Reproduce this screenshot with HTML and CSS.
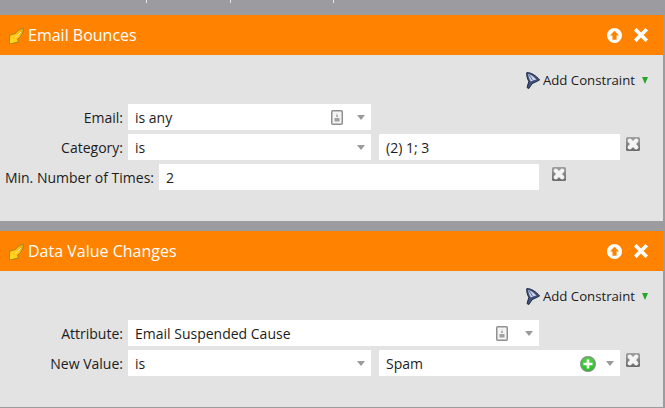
FILE: index.html
```html
<!DOCTYPE html>
<html lang="en">
  <head>
    <meta charset="UTF-8" />
    <title>Smart list filters</title>
    <link rel="stylesheet" href="styles.css">
  </head>
  <body>
    <svg class="sprites" width="0" height="0" aria-hidden="true">
      <defs>
        <linearGradient id="bolt-fill" x1="1" y1="0" x2="0" y2="1">
          <stop offset="0" stop-color="#e0a820" />
          <stop offset=".55" stop-color="#ffc814" />
          <stop offset="1" stop-color="#ffe02a" />
        </linearGradient>
        <linearGradient id="del-fill" x1="0" y1="0" x2="0" y2="1">
          <stop offset="0" stop-color="#a0a0a0" />
          <stop offset="1" stop-color="#6c6c6c" />
        </linearGradient>
        <linearGradient id="plus-fill" x1="0" y1="0" x2="0" y2="1">
          <stop offset="0" stop-color="#58d04c" />
          <stop offset="1" stop-color="#22c022" />
        </linearGradient>
        <symbol id="bolt" viewBox="0 0 15 16">
          <path d="M15 0 C11 1 8 2.5 6.5 5.5 L.8 7 L.3 16 L9.5 14 L8.5 11 C12 9.5 14 5 15 0Z" fill="url(#bolt-fill)" stroke="#a97c1a" stroke-width=".9" stroke-linejoin="round" />
          <path d="M12 4 L6 10" stroke="#fff0a0" stroke-width=".9" />
        </symbol>
        <symbol id="up" viewBox="0 0 16 16">
          <circle cx="8" cy="8" r="8" fill="#fff" />
          <path d="M8 3 L12.8 8 H10.2 V12.5 H5.8 V8 H3.2Z" fill="#ff8300" />
        </symbol>
        <symbol id="close" viewBox="0 0 14 14">
          <path d="M2.5 2.5 L11.5 11.5 M11.5 2.5 L2.5 11.5" stroke="#fff" stroke-width="3.6" stroke-linecap="square" />
        </symbol>
        <symbol id="funnel" viewBox="0 0 14 17">
          <path d="M.8 .6 C5 .4 10 3.5 13.6 8 C11 9.6 8 10.6 6 11.8 L2.8 16.6 L1 15.6 L2.8 9.5 C1.2 6.5 .3 3 .8 .6Z" fill="#3f4f78" stroke="#222c4a" stroke-width="1" stroke-linejoin="round" />
          <path d="M2.2 2 C5 2.5 7.5 4.5 10.5 7.6 C8.5 8 6.5 8.8 4.8 9.5 C3.4 7 2.4 4.5 2.2 2Z" fill="#c9d4e8" />
          <path d="M3.4 3 L6.4 8" stroke="#5a6b92" stroke-width="1" />
        </symbol>
        <symbol id="badge" viewBox="0 0 12 15">
          <rect x=".75" y=".75" width="10.5" height="13.5" rx="1" fill="#f4f4f4" stroke="#8f8f8f" stroke-width="1.5" />
          <path d="M6 3 L7 7 H5Z M3.5 8 H8.5 V11.5 H3.5Z" fill="#a0a0a0" />
        </symbol>
        <symbol id="del" viewBox="0 0 14 14">
          <rect width="14" height="14" rx="1.5" fill="url(#del-fill)" />
          <path d="M3.8 3.8 L10.2 10.2 M10.2 3.8 L3.8 10.2" stroke="#f4f4f4" stroke-width="4.4" stroke-linecap="round" />
        </symbol>
        <symbol id="plus" viewBox="0 0 16 16">
          <circle cx="8" cy="8" r="7.4" fill="url(#plus-fill)" stroke="#7f947f" stroke-width="1.2" />
          <path d="M8 3.5 V12.5 M3.5 8 H12.5" stroke="#fff" stroke-width="2.6" />
        </symbol>
      </defs>
    </svg>

    <!-- bottom edge of the nav behind the panels -->
    <div class="top-strip">
      <span class="tick tick-a"></span>
      <span class="tick tick-b"></span>
      <span class="tick tick-c"></span>
    </div>

    <section class="filter">
      <header class="filter-head">
        <svg class="bolt"><use href="#bolt" /></svg>
        <h2>Email Bounces</h2>
        <svg class="up"><use href="#up" /></svg>
        <svg class="close"><use href="#close" /></svg>
      </header>
      <div class="filter-body body-first">
        <div class="add-row">
          <svg class="funnel"><use href="#funnel" /></svg>
          <span>Add Constraint</span>
          <span class="green-arrow"></span>
        </div>
        <div class="row">
          <label class="label">Email:</label>
          <div class="field w-select">
            <span class="value">is any</span>
            <svg class="badge"><use href="#badge" /></svg>
            <span class="arrow"></span>
          </div>
        </div>
        <div class="row">
          <label class="label">Category:</label>
          <div class="field w-select">
            <span class="value">is</span>
            <span class="arrow"></span>
          </div>
          <div class="field w-value">
            <span class="value">(2) 1; 3</span>
          </div>
          <svg class="del del-value"><use href="#del" /></svg>
        </div>
        <div class="row">
          <label class="label label-long">Min. Number of Times:</label>
          <div class="field w-times">
            <span class="value">2</span>
          </div>
          <svg class="del del-times"><use href="#del" /></svg>
        </div>
      </div>
    </section>

    <section class="filter second">
      <header class="filter-head">
        <svg class="bolt"><use href="#bolt" /></svg>
        <h2>Data Value Changes</h2>
        <svg class="up"><use href="#up" /></svg>
        <svg class="close"><use href="#close" /></svg>
      </header>
      <div class="filter-body body-second">
        <div class="add-row">
          <svg class="funnel"><use href="#funnel" /></svg>
          <span>Add Constraint</span>
          <span class="green-arrow"></span>
        </div>
        <div class="row">
          <label class="label">Attribute:</label>
          <div class="field w-attr">
            <span class="value">Email Suspended Cause</span>
            <svg class="badge"><use href="#badge" /></svg>
            <span class="arrow arrow-wide"></span>
          </div>
        </div>
        <div class="row">
          <label class="label">New Value:</label>
          <div class="field w-select">
            <span class="value">is</span>
            <span class="arrow"></span>
          </div>
          <div class="field w-value">
            <span class="value">Spam</span>
            <svg class="plus"><use href="#plus" /></svg>
            <span class="arrow arrow-near"></span>
          </div>
          <svg class="del del-value"><use href="#del" /></svg>
        </div>
      </div>
    </section>
  </body>
</html>
```

FILE: styles.css
```css
* {
  box-sizing: border-box;
}
html,
body {
  height: 100%;
}
body {
  margin: 0;
  background: #9b9ba0;
  font-family: "Open Sans", sans-serif;
  font-size: 14px;
  color: #1c1c1c;
  overflow: hidden;
}
.sprites {
  display: block;
  height: 0;
}
.top-strip {
  display: flex;
  height: 15px;
}
.tick {
  width: 1px;
  height: 3px;
  background: #e8e8ea;
}
.tick-a {
  margin-left: 146px;
}
.tick-b {
  margin-left: 83px;
}
.tick-c {
  margin-left: 102px;
}
.filter {
  margin-right: 2px;
}
.second {
  margin-top: 10px;
}
.filter-head {
  display: flex;
  align-items: center;
  height: 40px;
  padding: 0 15px 0 9px;
  background: #ff8300;
  color: #fff;
}
.filter-head h2 {
  flex: 1;
  margin: 0 0 0 4px;
  font-size: 16px;
  font-weight: 400;
}
.bolt {
  width: 15px;
  height: 16px;
  margin-top: 2px;
  overflow: visible;
}
.up {
  width: 15px;
  height: 15px;
  margin-right: 12px;
}
.close {
  width: 14px;
  height: 14px;
}
.filter-body {
  background: #e3e3e3;
  padding-top: 16px;
}
.body-first {
  height: 166px;
}
.body-second {
  height: 136px;
}
.add-row {
  display: flex;
  align-items: center;
  justify-content: flex-end;
  height: 18px;
  padding-right: 15px;
  font-size: 13.2px;
}
.funnel {
  width: 14px;
  height: 17px;
  margin-right: 3px;
}
.green-arrow {
  width: 0;
  height: 0;
  margin-left: 7px;
  border-left: 3.5px solid transparent;
  border-right: 3.5px solid transparent;
  border-top: 7px solid #26a626;
}
.row {
  display: flex;
  align-items: center;
  height: 26px;
  margin-bottom: 4px;
}
.add-row + .row {
  margin-top: 15px;
}
.label {
  width: 123px;
  text-align: right;
}
.label-long {
  width: 154px;
  white-space: nowrap;
}
.field {
  display: flex;
  align-items: center;
  height: 26px;
  margin-left: 5px;
  padding: 1px 6px 0 7px;
  background: #fff;
}
.value {
  flex: 1;
  white-space: nowrap;
}
.w-select {
  width: 243px;
}
.w-value {
  width: 241px;
  margin-left: 8px;
}
.w-times {
  width: 380px;
}
.w-attr {
  width: 411px;
}
.arrow {
  width: 0;
  height: 0;
  border-left: 4px solid transparent;
  border-right: 4px solid transparent;
  border-top: 5px solid #9a9a9a;
  margin-left: 14px;
}
.arrow-wide {
  margin-left: 17px;
}
.arrow-near {
  margin-left: 10px;
}
.badge {
  width: 12px;
  height: 15px;
}
.plus {
  width: 16px;
  height: 16px;
}
.del {
  width: 14px;
  height: 14px;
  align-self: flex-start;
  margin-top: 3px;
}
.del-value {
  margin-left: 6px;
}
.del-times {
  margin-left: 13px;
}
```
